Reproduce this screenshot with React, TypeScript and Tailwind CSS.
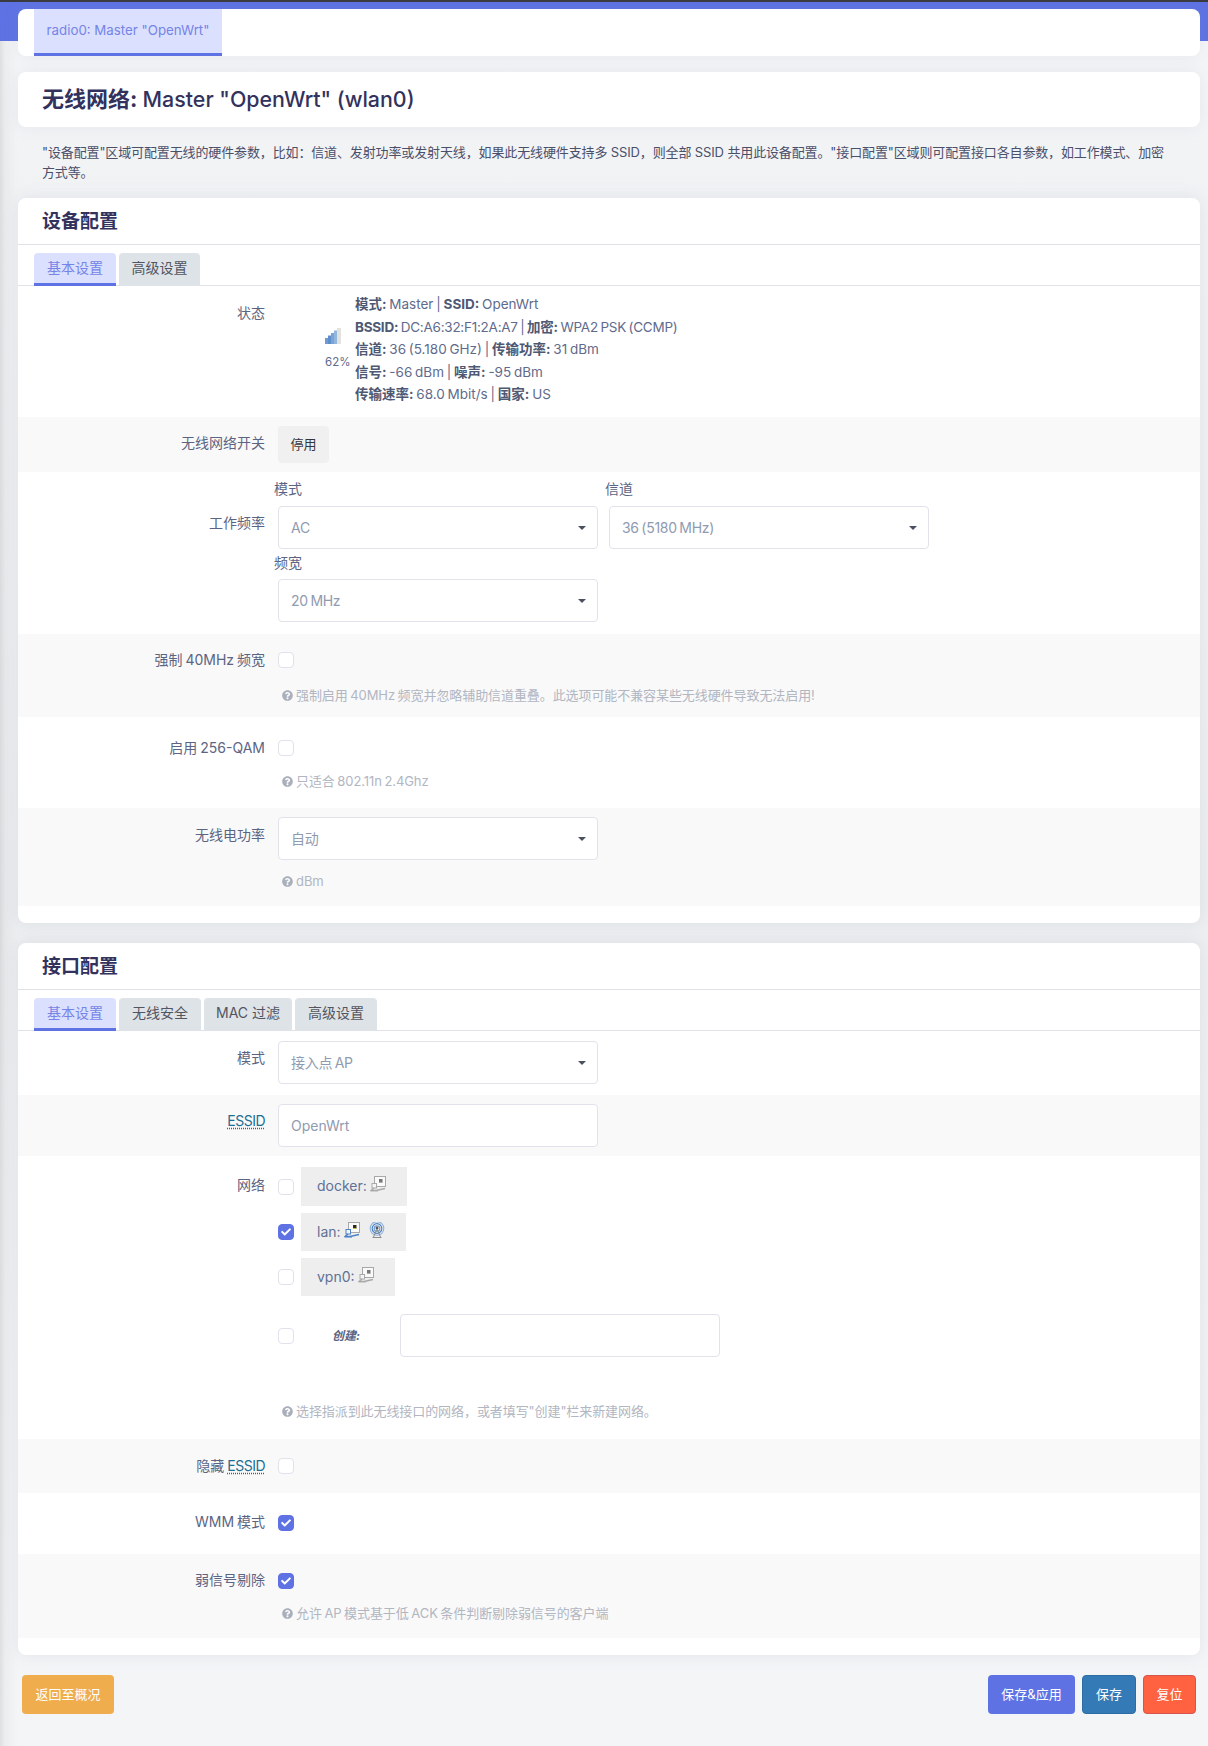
import type { ReactNode } from "react";
import { FaCheck, FaQuestionCircle } from "react-icons/fa";

const selectBox = "flex h-[43px] w-[320px] items-center justify-between rounded border border-[#e2e2ec] bg-white pl-[12px] pr-[11px] text-[14px] text-[#8f9bb0]";

function Row({
  label,
  gray,
  labelPad,
  className,
  children,
}: {
  label: ReactNode;
  gray?: boolean;
  labelPad: string;
  className: string;
  children: ReactNode;
}) {
  return (
    <div className={`flex ${gray ? "bg-[#f9f9f9]" : ""} ${className}`}>
      <div className={`mr-[13px] w-[247px] shrink-0 text-right text-[14px] leading-5 text-[#5b6583] [word-spacing:-1px] ${labelPad}`}>{label}</div>
      <div className="min-w-0 flex-1">{children}</div>
    </div>
  );
}

function Select({ value }: { value: string }) {
  return (
    <div className={selectBox}>
      <span className="tracking-[-0.3px] [word-spacing:-1px]">{value}</span>
      <span className="h-0 w-0 border-x-[4px] border-t-[4px] border-x-transparent border-t-[#4a5060]" />
    </div>
  );
}

function Checkbox({ checked, className }: { checked?: boolean; className?: string }) {
  return (
    <div
      className={`flex h-4 w-4 shrink-0 items-center justify-center rounded-[4px] border ${
        checked ? "border-[#5e72e4] bg-[#5e72e4]" : "border-[#dfe2ea] bg-white"
      } ${className ?? ""}`}
    >
      {checked ? <FaCheck className="h-[10px] w-[10px] text-white" /> : null}
    </div>
  );
}

function Help({ text, className }: { text: string; className: string }) {
  return (
    <div className={`flex items-center pl-[4px] text-[13px] leading-5 tracking-[-0.08px] text-[#b1b6c2] [word-spacing:-1px] ${className}`}>
      <FaQuestionCircle className="mr-[3px] h-[11px] w-[11px] text-[#a9afbb]" />
      {text}
    </div>
  );
}

function Tabs({ items }: { items: [string, string][] }) {
  return (
    <div className="mt-[8px] flex h-[33px] gap-[3px] border-b border-[#e0e2e6] pl-4">
      {items.map(([name, width], i) => (
        <div
          key={name}
          className={`flex h-[33px] items-center justify-center rounded-t pb-[2px] text-[14px] ${width} ${
            i === 0 ? "border-b-[3px] border-[#5e72e4] bg-[#dce0ff] text-[#7584e6]" : "bg-[#dee3e8] pb-[5px] text-[#51555f]"
          }`}
        >
          {name}
        </div>
      ))}
    </div>
  );
}

function Card({ title, children, className }: { title: string; children: ReactNode; className: string }) {
  return (
    <section className={`rounded-lg bg-white pb-[17px] shadow-[0_0_16px_rgba(136,152,170,0.16)] ${className}`}>
      <h2 className="h-[47px] border-b border-[#dfe1e5] pl-6 text-[19px] font-bold leading-[47px] text-[#32325d]">{title}</h2>
      {children}
    </section>
  );
}

function SignalIcon() {
  return (
    <svg width="16" height="16" viewBox="0 0 16 16">
      <rect x="0" y="10" width="3" height="6" fill="#6f9bd0" />
      <rect x="3" y="7.5" width="3" height="8.5" fill="#5f8fca" />
      <rect x="6" y="5" width="3" height="11" fill="#7aa3d6" />
      <rect x="9" y="2.5" width="3" height="13.5" fill="#93b6df" />
      <rect x="12" y="0" width="4" height="16" fill="#e2e2de" />
    </svg>
  );
}

function EthernetIcon({ active }: { active?: boolean }) {
  const cable = active ? "#4d82c4" : "#a9a9a9";
  return (
    <svg width="16" height="16" viewBox="0 0 16 16" className="ml-[3px]">
      <rect x="4.5" y="0.5" width="11" height="10" fill="#fafafa" stroke="#a8a8a8" />
      <rect x="9" y="3" width="3.5" height="3.5" fill={active ? "#2c2c20" : "#777"} />
      <rect x="9" y="6" width="3.5" height="1" fill={active ? "#d9b93c" : "#aaa"} />
      <rect x="2" y="7.5" width="4.5" height="4.5" fill="#f5f5f5" stroke={cable} />
      <path d="M4 12 L1 14.5 L6 14.5 L15 12.5" fill="none" stroke={cable} strokeWidth="1.4" />
      <path d="M1 15.5 L8 15.5" fill="none" stroke={active ? "#8fb2de" : "#cfcfcf"} />
    </svg>
  );
}

function WifiIcon() {
  return (
    <svg width="16" height="16" viewBox="0 0 16 16" className="ml-[9px]">
      <circle cx="8" cy="6.5" r="6.8" fill="none" stroke="#8fb2de" strokeWidth="1.1" />
      <circle cx="8" cy="6.5" r="4.8" fill="none" stroke="#4d82c4" strokeWidth="1.2" />
      <circle cx="8" cy="6.5" r="2.8" fill="none" stroke="#6f9bd0" strokeWidth="1.1" />
      <circle cx="8" cy="6" r="1.4" fill="#555" />
      <path d="M8 7 L4.5 15 M8 7 L11.5 15 M3.5 15.5 L12.5 15.5" fill="none" stroke="#8d8d8d" />
    </svg>
  );
}

function NetworkItem({
  name,
  checked,
  width,
  height,
  className,
  children,
}: {
  name: string;
  checked?: boolean;
  width: string;
  height: string;
  className?: string;
  children: ReactNode;
}) {
  return (
    <div className={`flex items-center gap-[7px] ${className ?? ""}`}>
      <Checkbox checked={checked} />
      <div className={`flex items-start bg-[#eeeeee] pl-4 pt-[9px] text-[14px] leading-5 text-[#5f7196] ${width} ${height}`}>
        {name}:{children}
      </div>
    </div>
  );
}

function Essid() {
  return <abbr className="tracking-[-0.5px] text-[#1d6f93] underline decoration-dotted underline-offset-2">ESSID</abbr>;
}

export default function App() {
  return (
    <div className="min-h-[1746px] bg-[linear-gradient(180deg,#3b3b3f_0,#3b3b3f_2px,#5e72e4_2px,#5e72e4_41px,transparent_41px),linear-gradient(90deg,rgba(0,0,0,0.09)_0,rgba(0,0,0,0.03)_5px,transparent_18px),linear-gradient(180deg,#f4f5f7_41px,#f1f2f4_200px,#eceef0_900px,#f4f5f7_1700px)] pb-[32px] pl-[18px] pr-2 pt-[9px] font-['Inter','Noto_Sans_CJK_SC',sans-serif] text-[14px]">
      <nav className="h-[47px] rounded-lg bg-white pl-4 shadow-[0_0_16px_rgba(136,152,170,0.12)]">
        <div className="flex h-[47px] w-[188px] items-center justify-center border-b-[3px] border-[#5e72e4] bg-[#dce0ff] text-[13.3px] text-[#7584e6]">
          radio0: Master "OpenWrt"
        </div>
      </nav>

      <h1 className="mt-4 h-[55px] rounded-lg bg-white pl-6 text-[22px] font-bold leading-[54px] text-[#32325d] shadow-[0_0_16px_rgba(136,152,170,0.12)]">
        无线网络: <span className="text-[21.4px] font-medium">Master "OpenWrt" (wlan0)</span>
      </h1>

      <p className="mb-4 mt-4 pl-6 pr-[30px] text-[13px] leading-[19.5px] tracking-[-0.13px] text-[#4a4f6a]">
        "设备配置"区域可配置无线的硬件参数，比如：信道、发射功率或发射天线，如果此无线硬件支持多 SSID，则全部 SSID 共用此设备配置。"接口配置"区域则可配置接口各自参数，如工作模式、加密方式等。
      </p>

      <Card title="设备配置" className="">
        <Tabs items={[["基本设置", "w-[82px]"], ["高级设置", "w-[81px]"]]} />

        <Row label="状态" labelPad="pt-[17px]" className="h-[131px]">
          <div className="flex pl-[47px] pt-[7px] text-[#5f6b8c]">
            <div className="w-[30px] shrink-0 pt-[35px] text-[11.5px] leading-5">
              <SignalIcon />
              <div className="mt-[8px]">62%</div>
            </div>
            <div className="text-[13.5px] leading-[22.5px] [word-spacing:-1px]">
              <div><b className="text-[#4e5873]">模式:</b> Master | <b className="text-[#4e5873]">SSID:</b> OpenWrt</div>
              <div className="tracking-[-0.25px]"><b className="text-[#4e5873]">BSSID:</b> DC:A6:32:F1:2A:A7 | <b className="text-[#4e5873]">加密:</b> WPA2 PSK (CCMP)</div>
              <div><b className="text-[#4e5873]">信道:</b> 36 (5.180 GHz) | <b className="text-[#4e5873]">传输功率:</b> 31 dBm</div>
              <div><b className="text-[#4e5873]">信号:</b> -66 dBm | <b className="text-[#4e5873]">噪声:</b> -95 dBm</div>
              <div><b className="text-[#4e5873]">传输速率:</b> 68.0 Mbit/s | <b className="text-[#4e5873]">国家:</b> US</div>
            </div>
          </div>
        </Row>

        <Row label="无线网络开关" gray labelPad="pt-[16px]" className="h-[55px]">
          <div className="pt-[9px]">
            <button className="h-[37px] w-[51px] rounded bg-[#f0f0f0] text-[13px] text-[#33363d]">停用</button>
          </div>
        </Row>

        <Row label="工作频率" labelPad="pt-[41px]" className="h-[162px]">
          <div className="grid w-fit grid-cols-[320px_320px] gap-x-[11px] pt-[7px]">
            <div>
              <div className="-ml-1 mb-[7px] text-[14px] leading-5 text-[#5b6583]">模式</div>
              <Select value="AC" />
            </div>
            <div>
              <div className="-ml-1 mb-[7px] text-[14px] leading-5 text-[#5b6583]">信道</div>
              <Select value="36 (5180 MHz)" />
            </div>
            <div className="mt-1">
              <div className="-ml-1 mb-[6px] text-[14px] leading-5 text-[#5b6583]">频宽</div>
              <Select value="20 MHz" />
            </div>
          </div>
        </Row>

        <Row label="强制 40MHz 频宽" gray labelPad="pt-[16px]" className="h-[83px]">
          <Checkbox className="mt-[18px]" />
          <Help text="强制启用 40MHz 频宽并忽略辅助信道重叠。此选项可能不兼容某些无线硬件导致无法启用!" className="mt-[17px]" />
        </Row>

        <Row label="启用 256-QAM" labelPad="pt-[21px]" className="h-[91px]">
          <Checkbox className="mt-[23px]" />
          <Help text="只适合 802.11n 2.4Ghz" className="mt-[15px]" />
        </Row>

        <Row label="无线电功率" gray labelPad="pt-[17px]" className="h-[98px]">
          <div className="pt-[9px]">
            <Select value="自动" />
          </div>
          <Help text="dBm" className="mt-[11px]" />
        </Row>
      </Card>

      <Card title="接口配置" className="mt-[20px]">
        <Tabs items={[["基本设置", "w-[82px]"], ["无线安全", "w-[82px]"], ["MAC 过滤", "w-[88px]"], ["高级设置", "w-[82px]"]]} />

        <Row label="模式" labelPad="pt-[17px]" className="h-[64px]">
          <div className="pt-[10px]">
            <Select value="接入点 AP" />
          </div>
        </Row>

        <Row label={<Essid />} gray labelPad="pt-[16px]" className="h-[61px]">
          <div className="pt-[9px]">
            <div className="flex h-[43px] w-[320px] items-center rounded border border-[#e2e2ec] bg-white pl-[12px] text-[14px] text-[#8f9bb0]">OpenWrt</div>
          </div>
        </Row>

        <Row label="网络" labelPad="pt-[19px]" className="h-[283px]">
          <div className="pt-[11px]">
            <NetworkItem name="docker" width="w-[106px]" height="h-[39px]">
              <EthernetIcon />
            </NetworkItem>
            <NetworkItem name="lan" checked width="w-[105px]" height="h-[38px]" className="mt-[7px]">
              <EthernetIcon active />
              <WifiIcon />
            </NetworkItem>
            <NetworkItem name="vpn0" width="w-[94px]" height="h-[38px]" className="mt-[7px]">
              <EthernetIcon />
            </NetworkItem>
            <div className="mt-[18px] flex items-center">
              <Checkbox />
              <em className="ml-[38px] w-[68px] text-[12px] font-bold text-[#5b6583]">创建:</em>
              <div className="h-[43px] w-[320px] rounded border border-[#e2e2ec] bg-white" />
            </div>
            <Help text="选择指派到此无线接口的网络，或者填写&quot;创建&quot;栏来新建网络。" className="mt-[44px]" />
          </div>
        </Row>

        <Row
          label={
            <>
              隐藏 <Essid />
            </>
          }
          gray
          labelPad="pt-[17px]"
          className="h-[54px]"
        >
          <Checkbox className="mt-[19px]" />
        </Row>

        <Row label="WMM 模式" labelPad="pt-[19px]" className="h-[61px]">
          <Checkbox checked className="mt-[22px]" />
        </Row>

        <Row label="弱信号剔除" gray labelPad="pt-[16px]" className="h-[84px]">
          <Checkbox checked className="mt-[19px]" />
          <Help text="允许 AP 模式基于低 ACK 条件判断剔除弱信号的客户端" className="mt-[14px]" />
        </Row>
      </Card>

      <footer className="mt-[20px] flex items-center justify-between pl-1 pr-1 text-[13px] text-white">
        <button className="h-[39px] w-[92px] rounded bg-[#f0ad4e]">返回至概况</button>
        <div className="flex gap-[7px]">
          <button className="h-[39px] w-[87px] rounded bg-[#5e72e4]">保存&应用</button>
          <button className="h-[39px] w-[54px] rounded border border-[#2e6da4] bg-[#337ab7]">保存</button>
          <button className="h-[39px] w-[53px] rounded border border-[#d9534f] bg-[#ff6240]">复位</button>
        </div>
      </footer>
    </div>
  );
}
